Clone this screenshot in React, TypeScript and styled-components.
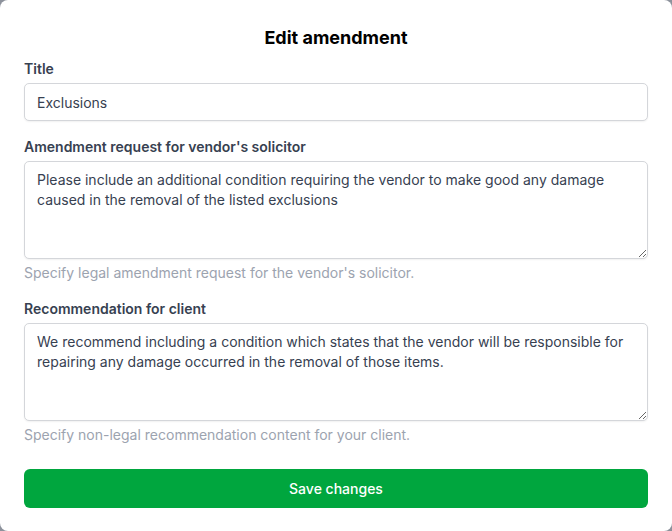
import React from 'react'
import styled, { createGlobalStyle } from 'styled-components'

const GlobalStyle = createGlobalStyle`
  html, body {
    margin: 0;
    padding: 0;
    background: #8d929c;
  }
  * {
    box-sizing: border-box;
  }
`

const Modal = styled.div`
  width: 672px;
  height: 531px;
  background: #ffffff;
  border-radius: 8px;
  padding: 24px 24px 0;
  font-family: Inter, 'Noto Sans', sans-serif;
  display: flex;
  flex-direction: column;
`

const Heading = styled.h2`
  margin: 0 0 7px;
  font-size: 18px;
  line-height: 28px;
  font-weight: 700;
  color: #000000;
  text-align: center;
`

const Form = styled.form`
  display: flex;
  flex-direction: column;
  gap: 16px;
`

const Field = styled.div`
  display: flex;
  flex-direction: column;
  gap: 4px;
`

const Label = styled.label`
  font-size: 14px;
  line-height: 20px;
  font-weight: 600;
  color: #374151;
`

const controlStyles = `
  width: 100%;
  border: 1px solid #d4d6da;
  border-radius: 5px;
  box-shadow: 0 1px 2px rgba(0, 0, 0, 0.06);
  padding: 8px 12px;
  font-family: Inter, 'Noto Sans', sans-serif;
  font-size: 14px;
  line-height: 20px;
  color: #374151;
  background: #ffffff;
  outline: none;
`

const Input = styled.input`
  ${controlStyles}
  height: 38px;
`

const TextArea = styled.textarea`
  ${controlStyles}
  height: 98px;
  resize: vertical;
  display: block;
`

const Help = styled.p`
  margin: 0;
  font-size: 14px;
  line-height: 20px;
  color: #9ca3af;
`

const SaveButton = styled.button`
  margin-top: 8px;
  height: 39px;
  width: 100%;
  border: none;
  border-radius: 6px;
  background: #00a63e;
  color: #ffffff;
  font-family: Inter, 'Noto Sans', sans-serif;
  font-size: 14px;
  font-weight: 500;
  cursor: pointer;
`

export default function App() {
  return (
    <>
      <GlobalStyle />
      <Modal>
        <Heading>Edit amendment</Heading>
        <Form onSubmit={(e) => e.preventDefault()}>
          <Field>
            <Label htmlFor="title">Title</Label>
            <Input id="title" defaultValue="Exclusions" />
          </Field>
          <Field>
            <Label htmlFor="request">Amendment request for vendor's solicitor</Label>
            <TextArea
              id="request"
              defaultValue="Please include an additional condition requiring the vendor to make good any damage caused in the removal of the listed exclusions"
            />
            <Help>Specify legal amendment request for the vendor's solicitor.</Help>
          </Field>
          <Field>
            <Label htmlFor="recommendation">Recommendation for client</Label>
            <TextArea
              id="recommendation"
              defaultValue="We recommend including a condition which states that the vendor will be responsible for repairing any damage occurred in the removal of those items."
            />
            <Help>Specify non-legal recommendation content for your client.</Help>
          </Field>
          <SaveButton type="submit">Save changes</SaveButton>
        </Form>
      </Modal>
    </>
  )
}
